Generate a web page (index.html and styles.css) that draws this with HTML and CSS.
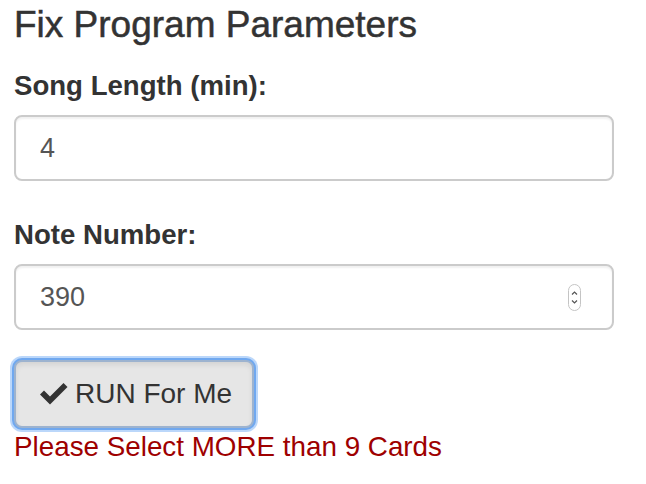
FILE: index.html
```html
<!DOCTYPE html>
<html>
<head>
<meta charset="utf-8">
<title>Fix Program Parameters</title>
<link rel="stylesheet" href="styles.css">
</head>
<body>
<h4 class="title">Fix Program Parameters</h4>
<form class="params">
  <div class="group">
    <label class="label" for="len">Song Length (min):</label>
    <div class="field">
      <input class="field-input" id="len" type="text" value="4">
    </div>
  </div>
  <div class="group">
    <label class="label" for="notes">Note Number:</label>
    <div class="field">
      <input class="field-input" id="notes" type="text" value="390">
      <span class="spinner">
        <svg width="13" height="27" viewBox="0 0 13 27">
          <rect x="0.5" y="0.5" width="12" height="26" rx="6" fill="#fff" stroke="#c4c4c4"/>
          <path d="M4 10.5 L6.5 8 L9 10.5" fill="none" stroke="#555" stroke-width="1.2"/>
          <path d="M4 16.5 L6.5 19 L9 16.5" fill="none" stroke="#555" stroke-width="1.2"/>
        </svg>
      </span>
    </div>
  </div>
  <button class="btn" type="button">
    <svg class="check" width="28" height="22" viewBox="0 0 28 22">
      <polygon points="0,11.5 4,7.5 10,13.5 23.5,0 27.5,4 10,21.5" fill="#333"/>
    </svg>
    <span>RUN For Me</span>
  </button>
  <p class="error">Please Select MORE than 9 Cards</p>
</form>
</body>
</html>
```

FILE: styles.css
```css
html, body {
  margin: 0;
  padding: 0;
  background: #fff;
}

body {
  padding-left: 14px;
  font-family: "Liberation Sans", Arial, Helvetica, sans-serif;
  color: #333;
}

.title {
  margin: 5px 0 26px;
  font-size: 37px;
  line-height: 40px;
  font-weight: normal;
  color: #333;
  -webkit-text-stroke: 0.5px #333;
}

.params {
  margin: 0;
}

.group {
  margin-bottom: 39px;
}

.group:last-of-type {
  margin-bottom: 30px;
}

.label {
  display: block;
  font-size: 27.6px;
  line-height: 30px;
  font-weight: bold;
  color: #333;
  margin-bottom: 14px;
}

.field {
  box-sizing: border-box;
  width: 600px;
  height: 66px;
  display: flex;
  align-items: center;
  padding: 0 31px 0 24px;
  border: 2px solid #cbcbcb;
  border-radius: 8px;
  background: #fff;
  box-shadow: inset 0 2px 2px rgba(0, 0, 0, 0.06);
}

.field-input {
  flex: 1;
  min-width: 0;
  border: none;
  outline: none;
  background: transparent;
  padding: 0;
  margin: 0;
  font-family: "Liberation Sans", Arial, Helvetica, sans-serif;
  font-size: 27px;
  line-height: 32px;
  color: #555;
}

.spinner {
  display: flex;
  align-items: center;
}

.btn {
  box-sizing: border-box;
  height: 68px;
  display: inline-flex;
  align-items: center;
  gap: 7px;
  padding: 0 20px 0 24px;
  margin: 0;
  font-family: "Liberation Sans", Arial, Helvetica, sans-serif;
  font-size: 28px;
  color: #333;
  background: #e6e6e6;
  border: 2px solid #9db3cf;
  border-radius: 8px;
  box-shadow: 0 0 0 2px #70a8ef, 0 0 0 4px rgba(120, 175, 245, 0.5), inset 0 3px 5px rgba(0, 0, 0, 0.08);
  cursor: pointer;
}

.check {
  display: block;
  flex: none;
}

.error {
  margin: 4px 0 0;
  font-size: 27.8px;
  line-height: 30px;
  color: #9e0000;
}
```
